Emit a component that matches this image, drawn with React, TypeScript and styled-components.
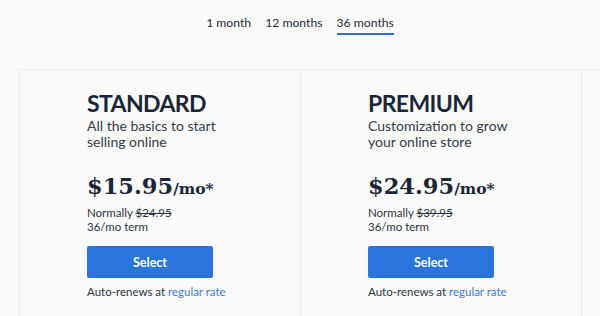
import styled, { createGlobalStyle } from "styled-components";

type Plan = {
    name: string;
    blurb: [string, string];
    price: string;
    normally: string;
};

const plans: Plan[] = [
    {name: "STANDARD", blurb: ["All the basics to start", "selling online"], price: "$15.95", normally: "$24.95"},
    {name: "PREMIUM", blurb: ["Customization to grow", "your online store"], price: "$24.95", normally: "$39.95"},
];

const terms = ["1 month", "12 months", "36 months"];

const GlobalStyle = createGlobalStyle`
    body {
        margin: 0;
        background: #fafafa;
        font-family: Lato, "Liberation Sans", sans-serif;
        color: #1e2a3b;
    }
`;

export default function App() {
    return (
        <Page>
            <GlobalStyle/>
            <Tabs>
                {terms.map((t) => (
                    <Tab key={t} active={t === "36 months"}>{t}</Tab>
                ))}
            </Tabs>
            <Cards>
                {plans.map((plan) => (
                    <Card key={plan.name}>
                        <Name>{plan.name}</Name>
                        <Blurb>{plan.blurb[0]}<br/>{plan.blurb[1]}</Blurb>
                        <Price>
                            {plan.price}<Per>/mo*</Per>
                        </Price>
                        <Small>Normally <s>{plan.normally}</s></Small>
                        <Small>36/mo term</Small>
                        <SelectButton>Select</SelectButton>
                        <Renew>Auto-renews at <a href="#">regular rate</a></Renew>
                    </Card>
                ))}
            </Cards>
        </Page>
    );
}

const Page = styled.div`
    width: 600px;
    height: 316px;
    overflow: hidden;
    padding-top: 14px;
    box-sizing: border-box;
`;

const Tabs = styled.div`
    display: flex;
    justify-content: center;
    gap: 14px;
`;

const Tab = styled.div<{ active?: boolean }>`
    font-size: 12.2px;
    line-height: 17px;
    padding-bottom: 2px;
    color: #1e2a3b;
    border-bottom: 2px solid ${(p) => (p.active ? "#2d6fd6" : "transparent")};
`;

const Cards = styled.div`
    display: grid;
    grid-template-columns: 281px 281px;
    margin: 34px 0 0 19px;
    border-top: 1px solid #ececec;
    border-left: 1px solid #ececec;
`;

const Card = styled.div`
    box-sizing: border-box;
    display: flex;
    flex-direction: column;
    align-items: flex-start;
    padding: 19px 0 0 67px;
    border-right: 1px solid #ececec;
    height: 260px;
`;

const Name = styled.h2`
    margin: 0;
    font-size: 23px;
    line-height: 28px;
    font-weight: 700;
    letter-spacing: -0.6px;
    color: #1a2638;
`;

const Blurb = styled.p`
    margin: 1px 0 0;
    font-size: 14px;
    line-height: 16px;
    color: #333c4a;
`;

const Price = styled.div`
    margin-top: 19px;
    font-family: "DejaVu Serif", "Liberation Serif", serif;
    font-weight: 700;
    font-size: 22.5px;
    line-height: 34px;
    color: #1a2638;
`;

const Per = styled.span`
    font-size: 15.5px;
`;

const Small = styled.div`
    font-size: 11.5px;
    line-height: 14px;
    color: #2b3442;
`;

const SelectButton = styled.button`
    margin-top: 12px;
    width: 126px;
    height: 32px;
    padding: 0;
    border: none;
    border-radius: 2px;
    background: #2a74db;
    color: #fff;
    font-family: Lato, "Liberation Sans", sans-serif;
    font-weight: 700;
    font-size: 12.5px;
`;

const Renew = styled.div`
    margin-top: 7px;
    font-size: 11.5px;
    line-height: 14px;
    color: #2b3442;

    a {
        color: #3b7dd8;
        text-decoration: none;
    }
`;
